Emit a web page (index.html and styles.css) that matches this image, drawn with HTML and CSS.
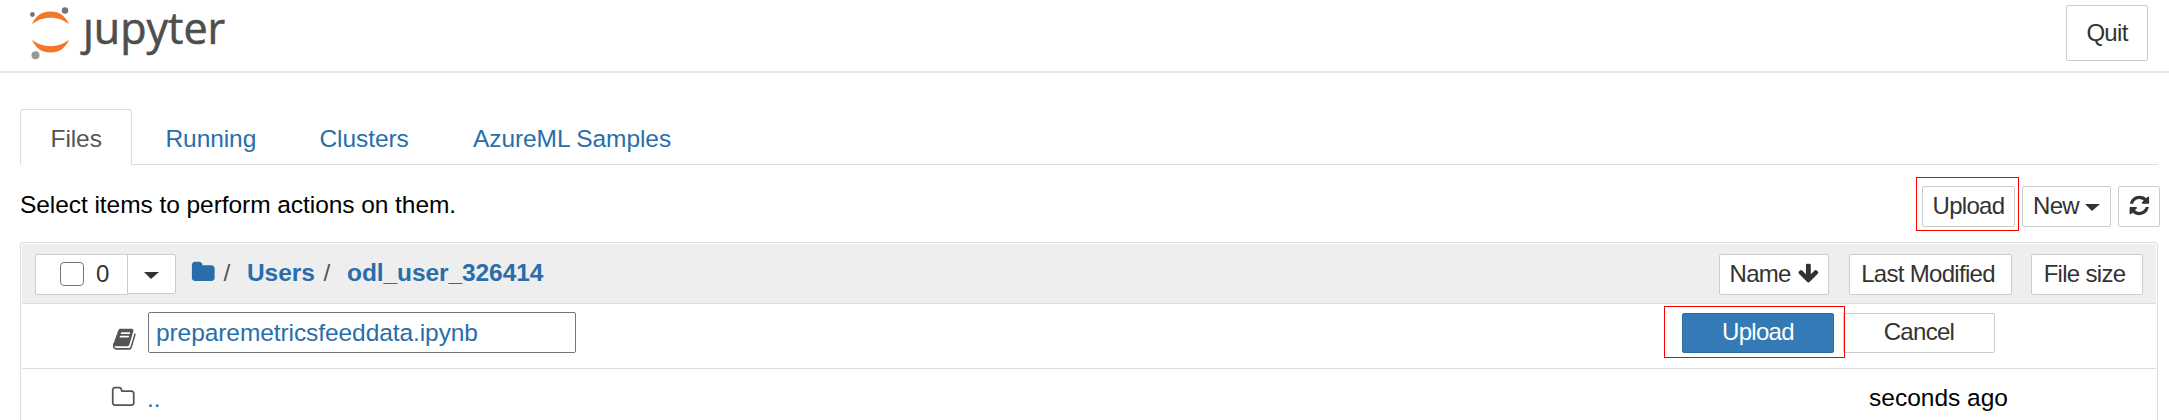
FILE: index.html
```html
<!DOCTYPE html>
<html lang="en">
<head>
<meta charset="utf-8">
<title>Jupyter</title>
<link rel="stylesheet" href="styles.css">
</head>
<body>
<header class="header">
  <div class="logo">
    <svg class="logo-mark" width="42" height="56" viewBox="0 0 42 56">
      <path d="M3 20.500C6 12 13 7.500 21.500 7.500S37 12 40 20.500C34.500 15.800 28.500 13.800 21.500 13.800S8.500 15.800 3 20.500Z" fill="#f37726"/>
      <path d="M3 35.500C6 44 13 48.500 21.500 48.500S37 44 40 35.500C34.500 40.200 28.500 42.200 21.500 42.200S8.500 40.200 3 35.500Z" fill="#f37726"/>
      <circle cx="3.400" cy="10.500" r="2.400" fill="#767677"/>
      <circle cx="36" cy="6.500" r="3.200" fill="#767677"/>
      <circle cx="6.500" cy="51.300" r="4" fill="#989798"/>
    </svg>
    <span class="wordmark">ȷupyter</span>
  </div>
  <button class="btn quit">Quit</button>
</header>
<nav class="tabs">
  <a class="tab active">Files</a>
  <a class="tab running">Running</a>
  <a class="tab clusters">Clusters</a>
  <a class="tab samples">AzureML Samples</a>
</nav>
<section class="toolbar">
  <p class="hint">Select items to perform actions on them.</p>
  <div class="actions">
    <div class="callout callout-top"><button class="btn upload">Upload</button></div>
    <button class="btn new">New <i class="caret"></i></button>
    <button class="btn refresh"><svg class="icon-sm" viewBox="0 0 1792 1792"><path d="M1639 1056q0 5-1 7-64 268-268 434.500t-478 166.500q-146 0-282.500-55t-243.500-157l-129 129q-19 19-45 19t-45-19-19-45v-448q0-26 19-45t45-19h448q26 0 45 19t19 45-19 45l-137 137q71 66 161 102t187 36q134 0 250-65t186-179q11-17 53-117 8-23 30-23h192q13 0 22.500 9.500t9.500 22.500zm25-800v448q0 26-19 45t-45 19h-448q-26 0-45-19t-19-45 19-45l138-138q-148-137-349-137-134 0-250 65t-186 179q-11 17-53 117-8 23-30 23h-199q-13 0-22.500-9.500t-9.500-22.500v-7q65-268 270-434.500t480-166.500q146 0 284 55.500t245 156.500l130-129q19-19 45-19t45 19 19 45z"/></svg></button>
  </div>
</section>
<main class="list">
  <div class="list-header">
    <div class="select-group">
      <div class="select-all"><input type="checkbox" class="check"><span>0</span></div>
      <button class="select-menu"><i class="caret"></i></button>
    </div>
    <div class="crumbs">
      <svg class="icon home" viewBox="0 0 1792 1792"><path d="M1728 608v704q0 92-66 158t-158 66h-1216q-92 0-158-66t-66-158v-960q0-92 66-158t158-66h320q92 0 158 66t66 158v32h672q92 0 158 66t66 158z"/></svg>
      <span class="slash">/</span><a class="crumb users">Users</a><span class="slash">/</span><a class="crumb">odl_user_326414</a>
    </div>
    <div class="sorts">
      <button class="btn sort-name">Name <svg class="icon-sm" viewBox="0 0 1792 1792"><path d="M1675 832q0 53-37 90l-651 652q-39 37-91 37-53 0-90-37l-651-652q-38-36-38-90 0-53 38-91l74-75q39-37 91-37 53 0 90 37l294 294v-704q0-52 38-90t90-38h128q52 0 90 38t38 90v704l294-294q37-37 90-37 52 0 91 37l75 75q37 39 37 91z"/></svg></button>
      <button class="btn sort-date">Last Modified</button>
      <button class="btn sort-size">File size</button>
    </div>
  </div>
  <div class="row upload-row">
    <svg class="icon book" viewBox="0 0 1792 1792"><path d="M1703 478q40 57 18 129l-275 906q-19 64-76.500 107.500t-122.500 43.500h-923q-77 0-148.500-53.500t-99.500-131.500q-24-67-2-127 0-4 3-27t4-37q1-8-3-21.500t-3-19.500q2-11 8-21t16.500-23.500 16.500-23.500q23-38 45-91.500t30-91.500q3-10 .5-30t-.5-28q3-11 17-28t17-23q21-36 42-92t25-90q1-9-2.500-32t.5-28q4-13 22-30.500t22-22.500q19-26 42.500-84.500t27.500-96.500q1-8-3-25.500t-2-26.500q2-8 9-18t18-23 17-21q8-12 16.500-30.500t15-35 16-36 19.500-32 26.500-23.500 36-11.500 47.500 5.500l-1 3q38-9 51-9h761q74 0 114 56t18 130l-274 906q-36 119-71.500 153.500t-128.500 34.500h-869q-27 0-38 15-11 16-1 43 24 70 144 70h923q29 0 56-15.500t35-41.500l300-987q7-22 5-57 38 15 59 43zm-1064 2q-4 13 2 22.500t20 9.500h608q13 0 25.500-9.500t16.500-22.500l21-64q4-13-2-22.500t-20-9.500h-608q-13 0-25.500 9.500t-16.500 22.500zm-83 256q-4 13 2 22.500t20 9.500h608q13 0 25.500-9.500t16.500-22.500l21-64q4-13-2-22.500t-20-9.500h-608q-13 0-25.500 9.500t-16.500 22.500z"/></svg>
    <input class="filename" type="text" value="preparemetricsfeeddata.ipynb">
    <div class="row-actions">
      <div class="callout callout-row"><button class="btn primary">Upload</button></div>
      <button class="btn cancel">Cancel</button>
    </div>
  </div>
  <div class="row parent-row">
    <svg class="icon folder" viewBox="0 0 1792 1792"><path d="M1600 1312v-704q0-40-28-68t-68-28h-704q-40 0-68-28t-28-68v-64q0-40-28-68t-68-28h-320q-40 0-68 28t-28 68v960q0 40 28 68t68 28h1216q40 0 68-28t28-68zm128-704v704q0 92-66 158t-158 66h-1216q-92 0-158-66t-66-158v-960q0-92 66-158t158-66h320q92 0 158 66t66 158v32h672q92 0 158 66t66 158z"/></svg>
    <a class="parent">..</a>
    <span class="modified">seconds ago</span>
  </div>
</main>
</body>
</html>
```
FILE: styles.css
```css
* { box-sizing: border-box; }
body {
  margin: 0;
  background: #fff;
  color: #000;
  font: 24.5px/35px "Liberation Sans", Arial, sans-serif;
}
button, input { font-family: inherit; margin: 0; }
svg { display: block; flex: none; }

.header {
  display: flex;
  justify-content: space-between;
  height: 73px;
  padding: 5px 21px 0 29px;
  border-bottom: 2px solid #e7e7e7;
}
.logo { display: flex; }
.logo-mark { margin-top: -1px; }
.wordmark {
  margin: -6px 0 0 12px;
  color: #4e4e4e;
  font: 43px/58px "Open Sans", "Noto Sans", sans-serif;
  -webkit-text-stroke: 0.6px #4e4e4e;
}

.btn {
  display: flex;
  flex: none;
  align-items: center;
  justify-content: center;
  height: 41px;
  padding: 0 0 2px;
  border: 1px solid #ccc;
  border-radius: 2px;
  background: #fff;
  color: #333;
  font-size: 24px;
  letter-spacing: -0.7px;
  line-height: 34px;
  white-space: pre;
}
.icon-sm { width: 22.750px; height: 22.750px; fill: #333; }
.quit { width: 82px; height: 56px; padding: 0; }

.tabs {
  display: flex;
  height: 56px;
  margin: 36px 11px 0 20px;
  border-bottom: 1px solid #ddd;
}
.tab {
  height: 56px;
  color: #296eaa;
  line-height: 60px;
  letter-spacing: -0.08px;
  white-space: nowrap;
}
.active {
  width: 112px;
  padding-left: 29.5px;
  border: 1px solid #ddd;
  border-bottom-color: #fff;
  border-radius: 4px 4px 0 0;
  color: #555;
  line-height: 58px;
}
.running { width: 154px; margin-left: 33.5px; }
.clusters { width: 153.5px; }

.toolbar {
  display: flex;
  justify-content: space-between;
  height: 77px;
  padding: 12px 9px 0 20px;
}
.hint { margin: 10px 0 0; letter-spacing: -0.06px; }
.actions { display: flex; }
.callout { border: 1px solid #f00; }
.callout-top { width: 103px; height: 54px; padding: 8px 0 0 5px; }
.upload { width: 93px; }
.new { width: 89px; margin: 9px 0 0 3px; }
.refresh { width: 42px; margin: 9px 0 0 7px; }
.caret {
  flex: none;
  border-top: 7px solid #333;
  border-left: 7px solid transparent;
  border-right: 8px solid transparent;
}
.new .caret { margin-top: 4px; }

.list {
  height: 178px;
  margin: 0 11px 0 20px;
  padding: 1px 1px 0;
  border: 1px solid #ddd;
  border-bottom: 0;
  border-radius: 3px 3px 0 0;
}
.list-header {
  display: flex;
  height: 60px;
  padding: 10px 13px 0;
  border-bottom: 1px solid #ddd;
  background: #eee;
}
.select-group { display: flex; }
.select-all {
  display: flex;
  align-items: center;
  width: 93px;
  height: 41px;
  padding: 0 0 2px 24px;
  border: 1px solid #ccc;
  border-radius: 2px 0 0 2px;
  background: #fff;
  color: #333;
  font-size: 24px;
}
.check {
  appearance: none;
  width: 24px;
  height: 24px;
  margin: 1px 12px 0 0;
  border: 1px solid #767676;
  border-radius: 4px;
  background: #fff;
}
.select-menu {
  display: flex;
  justify-content: center;
  width: 49px;
  height: 40px;
  margin-left: -1px;
  padding: 17px 0 0;
  border: 1px solid #ccc;
  border-radius: 0 2px 2px 0;
  background: #fff;
}
.crumbs { display: flex; margin: 1px 0 0 15px; }
.home { fill: #296eaa; margin-top: 5px; }
.slash { width: 8px; margin-left: 8px; color: #555; }
.crumb { margin-left: 15.5px; color: #296eaa; font-weight: bold; letter-spacing: -0.08px; }
.users { width: 68.5px; }
.sorts { display: flex; margin-left: auto; }
.sort-name { width: 110px; padding-left: 1px; }
.sort-date { width: 163px; margin-left: 20px; padding-right: 5px; }
.sort-size { width: 112px; margin-left: 19px; padding-right: 5px; }

.row { display: flex; }
.icon { width: 24.500px; height: 24.500px; }
.upload-row {
  height: 65px;
  padding: 2px 0 0 90px;
  border-bottom: 1px solid #ddd;
}
.book { margin-top: 21px; fill: #555; }
.filename {
  width: 428px;
  height: 41px;
  margin: 6px 0 0 11px;
  padding: 1px 0 0 7.5px;
  border: 1px solid #767676;
  border-radius: 2px;
  color: #296eaa;
  font-size: 24.5px;
  letter-spacing: -0.08px;
}
.row-actions { display: flex; margin: 0 161px 0 auto; }
.callout-row { z-index: 1; width: 181px; height: 52px; padding: 6px 0 0 17px; }
.primary { width: 152px; height: 40px; border-color: #2e6da4; background: #337ab7; color: #fff; }
.cancel { width: 152px; height: 40px; margin: 7px 0 0 -2px; }
.parent-row { height: 50px; padding: 11px 148px 0 89px; }
.folder { fill: #555; margin-top: 5px; }
.parent { margin: 1px 0 0 11.5px; color: #296eaa; }
.modified { margin-left: auto; }
```
